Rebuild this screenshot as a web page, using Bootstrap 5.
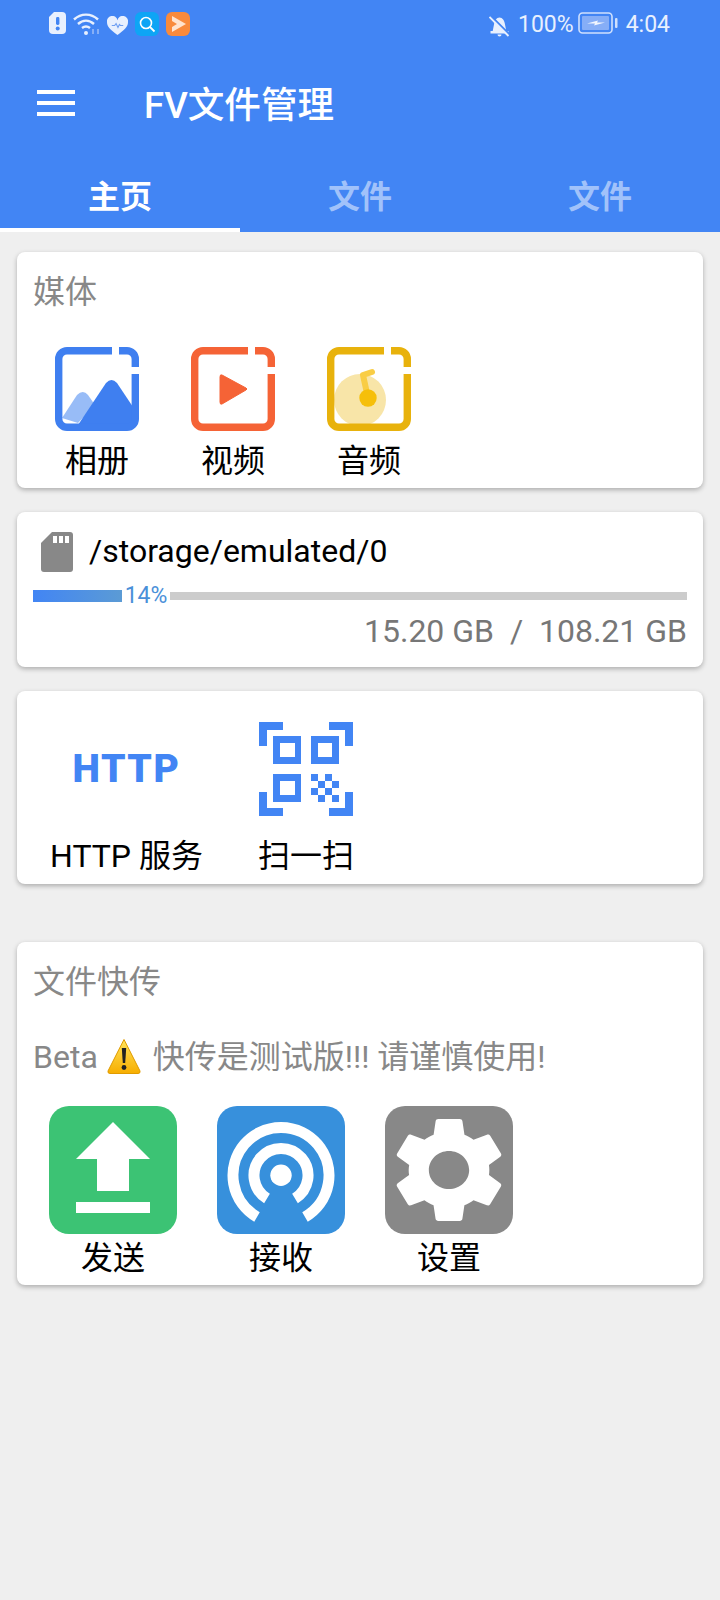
<!DOCTYPE html>
<html lang="zh-CN">
<head>
  <meta charset="UTF-8" />
  <meta name="viewport" content="width=device-width, initial-scale=1" />
  <title>FV文件管理</title>
  <link href="https://cdn.jsdelivr.net/npm/bootstrap@5.3.0/dist/css/bootstrap.min.css" rel="stylesheet" />
  <style>
    body { background: #efefef; font-family: Roboto, "Noto Sans CJK SC", sans-serif; width: 720px; min-height: 1600px; }
    .app-head { background: #4285f4; height: 232px; color: #fff; }
    .status-row { height: 48px; padding: 12px 50px 0 49px; font-size: 23px; line-height: 26px; color: #e8f0fe; }
    .status-icons { gap: 7px; }
    .tool-row { height: 114px; padding: 0 37px; }
    .menu-bars { width: 38px; height: 26px; display: flex; flex-direction: column; justify-content: space-between; margin: 0 69px 4px 0; }
    .menu-bars span { height: 4px; background: #fff; }
    .app-title { font-size: 36.6px; font-weight: 500; line-height: 1; margin-top: 2px; }
    .tab-row { height: 70px; }
    .tab-item { width: 240px; text-align: center; font-size: 32px; font-weight: 700; line-height: 70px; color: #a1c2fa; height: 70px; }
    .tab-item.on { color: #fff; border-bottom: 4px solid #fff; }
    .page-body { padding: 20px 17px; }
    .box { background: #fff; border: 0; border-radius: 8px; box-shadow: 0 2px 5px rgba(0,0,0,.28); margin-bottom: 24px; }
    .box-title { font-size: 32px; line-height: 40px; color: #888; padding: 20px 0 0 16px; }
    .media-box { height: 236px; }
    .media-row { padding: 35px 0 0 12px; }
    .media-item { width: 136px; text-align: center; }
    .media-item svg { display: block; margin: 0 auto 10px; }
    .item-label { font-size: 32px; line-height: 40px; color: #000; white-space: nowrap; }
    .store-box { height: 155px; padding: 20px 16px 0; }
    .sd-icon { margin: 0 16px 0 8px; }
    .store-path { font-size: 32px; line-height: 40px; color: #000; margin-top: -2px; }
    .bar-row { height: 12px; margin-top: 18px; }
    .bar-used { width: 89px; height: 12px; background: linear-gradient(90deg, #4285f4, #5b9bd5); }
    .bar-pct { width: 48px; text-align: center; font-size: 23px; line-height: 12px; color: #4a90d9; }
    .bar-rest { height: 8px; background: #ccc; }
    .store-size { font-size: 32px; line-height: 40px; color: #777; text-align: right; margin-top: 9px; white-space: pre; }
    .tools-box { height: 193px; margin-bottom: 58px; }
    .tools-row { padding: 31px 0 0 33px; gap: 55px; }
    .tools-item { text-align: center; }
    .http-mark { height: 94px; line-height: 94px; font-weight: 900; font-size: 39px; color: #4285f4; letter-spacing: 1.5px; }
    .tools-item svg { display: block; margin: 0 auto; }
    .tools-item .item-label { margin-top: 20px; }
    .share-box { height: 343px; margin-bottom: 0; }
    .beta-line { font-size: 32px; line-height: 40px; color: #888; padding: 35px 0 0 16px; white-space: nowrap; }
    .beta-line svg { vertical-align: -6px; margin: 0 4px 0 1px; }
    .share-row { padding: 29px 0 0 12px; }
    .share-item { width: 168px; text-align: center; padding-left: 20px; padding-right: 20px; }
    .share-item svg { display: block; }
    .share-item .item-label { line-height: 42px; margin-top: 3px; }
  </style>
</head>
<body>

<div class="app-head">
  <!-- status bar -->
  <div class="status-row d-flex justify-content-between">
    <div class="d-flex align-items-start status-icons">
      <svg width="17" height="22" viewBox="0 0 17 22"><path d="M5 0H13a4 4 0 0 1 4 4V18a4 4 0 0 1-4 4H4a4 4 0 0 1-4-4V5Z" fill="#e8f0fe"/><rect x="7" y="5" width="3.4" height="8" rx="1.4" fill="#4285f4"/><circle cx="8.7" cy="16.5" r="2" fill="#4285f4"/></svg>
      <svg width="27" height="24" viewBox="0 0 27 24" fill="none" stroke="#e8f0fe" stroke-width="2.4"><path d="M1 7.5C8 1 18 1 25 7.5"/><path d="M5 12C10 7.5 16 7.5 21 12"/><path d="M9 16C11.500 14 14.500 14 17 16"/><circle cx="13" cy="21" r="2" fill="#e8f0fe" stroke="none"/><path d="M20 22V17M25 17V22" stroke="#9dbdf8" stroke-width="1.500"/></svg>
      <svg width="21" height="20" viewBox="0 0 22 20" class="mt-1"><path d="M11 19.500C4 14 0 11 0 6a5.500 5.500 0 0 1 11-2 5.500 5.500 0 0 1 11 2c0 5-4 8-11 13.500Z" fill="#e8f0fe"/><path d="M5 9.500H8L9.500 7.500L11.500 11.500L13 8.500L14 9.500H17" fill="none" stroke="#6f9ff2" stroke-width="1.200"/></svg>
      <svg width="24" height="24" viewBox="0 0 24 24"><rect width="24" height="24" rx="6" fill="#0ea5f5"/><circle cx="11" cy="11" r="5.500" fill="none" stroke="#fff" stroke-width="1.600"/><path d="M15 15L19.500 19.500" stroke="#fff" stroke-width="1.800"/></svg>
      <svg width="24" height="24" viewBox="0 0 24 24"><rect width="24" height="24" rx="6" fill="#f98a3c"/><path d="M6 4L20 12L6 20V15L11 12L6 9Z" fill="#ffe3cf"/></svg>
    </div>
    <div class="d-flex align-items-start">
      <svg width="21" height="21" viewBox="0 0 21 21" class="mt-1 me-2"><path d="M3.500 16L5 8.500C5.500 4.500 7.500 1.500 10.500 1.500C13.500 1.500 15.500 4.500 16 8.500L17.500 16Z" fill="#e8f0fe"/><rect x="1.500" y="15" width="18" height="2.500" fill="#e8f0fe"/><path d="M8.500 18.500h4a2 2 0 0 1-4 0Z" fill="#e8f0fe"/><path d="M2 0L21 19" stroke="#4285f4" stroke-width="2"/><path d="M.5 1L19.500 20" stroke="#e8f0fe" stroke-width="1.800"/></svg>
      <span>100%</span>
      <svg width="40" height="22" viewBox="0 0 40 22" class="ms-1 me-2"><rect x="1" y="1" width="33" height="20" rx="3.500" fill="none" stroke="#cfe0fd" stroke-width="1.600"/><rect x="4" y="4" width="27" height="14" rx="1" fill="#86aef7"/><path d="M9 11.500L20 8.500L19 10.500H27L16 13.500L17 11.500Z" fill="#f2f6fe"/><rect x="37" y="6" width="2.500" height="10" rx="1" fill="#cfe0fd"/></svg>
      <span>4:04</span>
    </div>
  </div>

  <div class="tool-row d-flex align-items-center">
    <div class="menu-bars"><span></span><span></span><span></span></div>
    <div class="app-title">FV文件管理</div>
  </div>

  <div class="tab-row d-flex">
    <div class="tab-item on">主页</div>
    <div class="tab-item">文件</div>
    <div class="tab-item">文件</div>
  </div>
</div>

<div class="page-body">

  <!-- media -->
  <div class="card box media-box">
    <div class="box-title">媒体</div>
    <div class="media-row d-flex">
      <div class="media-item">
        <svg width="84" height="84" viewBox="0 0 84 84">
          <path d="M23 76L7 71L22 48Q28 42 33 48L40 58Z" fill="#98bcf7"/>
          <path d="M23 78L51 36Q56.500 30 62 36L78 60V78Z" fill="#3f7ff0"/>
          <path d="M64 3.700H72A8.300 8.300 0 0 1 80.300 12V20M80.300 27V72A8.300 8.300 0 0 1 72 80.300H12A8.300 8.300 0 0 1 3.700 72V12A8.300 8.300 0 0 1 12 3.700H57" fill="none" stroke="#3f7ff0" stroke-width="7.400"/>
        </svg>
        <div class="item-label">相册</div>
      </div>
      <div class="media-item">
        <svg width="84" height="84" viewBox="0 0 84 84">
          <path d="M31 28L55 41Q57 42 55 43L31 57Q29 58 29 55V30Q29 27 31 28Z" fill="#f56336" stroke="#f56336" stroke-width="1"/>
          <path d="M64 3.700H72A8.300 8.300 0 0 1 80.300 12V20M80.300 27V72A8.300 8.300 0 0 1 72 80.300H12A8.300 8.300 0 0 1 3.700 72V12A8.300 8.300 0 0 1 12 3.700H57" fill="none" stroke="#f56336" stroke-width="7.400"/>
        </svg>
        <div class="item-label">视频</div>
      </div>
      <div class="media-item">
        <svg width="84" height="84" viewBox="0 0 84 84">
          <clipPath id="discClip"><rect x="4" y="10" width="76" height="67"/></clipPath>
          <circle cx="33" cy="53" r="26" fill="#f8e5a8" clip-path="url(#discClip)"/>
          <path d="M41 51L36 28L45 25" fill="none" stroke="#f9cd45" stroke-width="6" stroke-linecap="round" stroke-linejoin="round"/>
          <circle cx="41" cy="51" r="8.700" fill="#f6bf0a"/>
          <path d="M64 3.700H72A8.300 8.300 0 0 1 80.300 12V20M80.300 27V72A8.300 8.300 0 0 1 72 80.300H12A8.300 8.300 0 0 1 3.700 72V12A8.300 8.300 0 0 1 12 3.700H57" fill="none" stroke="#e8b20c" stroke-width="7.400"/>
        </svg>
        <div class="item-label">音频</div>
      </div>
    </div>
  </div>

  <!-- storage -->
  <div class="card box store-box">
    <div class="d-flex align-items-center">
      <svg class="sd-icon" width="32" height="40" viewBox="0 0 32 40"><path d="M11 0H29a3 3 0 0 1 3 3V37a3 3 0 0 1-3 3H3a3 3 0 0 1-3-3V11Z" fill="#888"/><path d="M12 4h4v7h-4zM18 4h4v7h-4zM24 4h4v7h-4z" fill="#fff"/></svg>
      <div class="store-path">/storage/emulated/0</div>
    </div>
    <div class="bar-row d-flex align-items-center">
      <div class="bar-used"></div>
      <div class="bar-pct">14%</div>
      <div class="bar-rest flex-grow-1"></div>
    </div>
    <div class="store-size">15.20 GB  /  108.21 GB</div>
  </div>

  <!-- http / scan -->
  <div class="card box tools-box">
    <div class="tools-row d-flex">
      <div class="tools-item">
        <div class="http-mark">HTTP</div>
        <div class="item-label">HTTP 服务</div>
      </div>
      <div class="tools-item">
        <svg width="94" height="94" viewBox="0 0 94 94" fill="#4285f4">
          <path d="M0 0H24V8H8V24H0ZM70 0H94V24H86V8H70ZM0 70H8V86H24V94H0ZM86 70H94V94H70V86H86Z"/>
          <path fill-rule="evenodd" d="M14 14H42V42H14ZM21 21V35H36V21ZM52 14H80V42H52ZM59 21V35H73V21ZM14 52H42V80H14ZM21 59V73H36V59Z"/>
          <path d="M52 52h7v7h-7zM66 52h7v7h-7zM59 59h7v7h-7zM73 59h7v7h-7zM52 66h7v7h-7zM66 66h7v7h-7zM59 73h7v7h-7zM73 73h7v7h-7z"/>
        </svg>
        <div class="item-label">扫一扫</div>
      </div>
    </div>
  </div>

  <!-- file transfer -->
  <div class="card box share-box">
    <div class="box-title">文件快传</div>
    <div class="beta-line">Beta
      <svg width="34" height="36" viewBox="0 0 34 36"><defs><linearGradient id="warnFill" x1="0" y1="0" x2="0" y2="1"><stop offset="0" stop-color="#ffe45c"/><stop offset="1" stop-color="#f7ae00"/></linearGradient></defs><path d="M17 1.500L33 33Q33.500 35.500 31 35.500H3Q.500 35.500 1 33Z" fill="url(#warnFill)" stroke="#e09b00" stroke-width="1"/><path d="M14.800 10H19.200L18.200 25H15.800Z" fill="#222"/><circle cx="17" cy="29.500" r="2.400" fill="#222"/></svg>
      快传是测试版!!! 请谨慎使用!</div>
    <div class="share-row d-flex">
      <div class="share-item">
        <svg width="128" height="128" viewBox="0 0 128 128"><rect width="128" height="128" rx="20" fill="#3cc374"/><path d="M64 16L101 53H80V85H48V53H27ZM27 96H101V107H27Z" fill="#fff"/></svg>
        <div class="item-label">发送</div>
      </div>
      <div class="share-item">
        <svg width="128" height="128" viewBox="0 0 128 128"><rect width="128" height="128" rx="20" fill="#3790dc"/><g fill="none" stroke="#fff" stroke-width="11"><path d="M40 111A48 48 0 1 1 88 111"/><path d="M50 92.500A27 27 0 1 1 78 92.500"/></g><circle cx="64" cy="69.300" r="10.700" fill="#fff"/></svg>
        <div class="item-label">接收</div>
      </div>
      <div class="share-item">
        <svg width="128" height="128" viewBox="0 0 128 128"><rect width="128" height="128" rx="20" fill="#888"/><g transform="translate(-3.200 .4) scale(5.6 5.3)"><path fill="#fff" d="M19.140 12.940c.04-.3.06-.61.06-.94 0-.32-.02-.64-.07-.94l2.030-1.580c.18-.14.23-.41.12-.61l-1.920-3.320c-.12-.22-.37-.29-.59-.22l-2.390.96c-.5-.38-1.030-.7-1.620-.94l-.36-2.540c-.04-.24-.24-.41-.48-.41h-3.840c-.24 0-.43.17-.47.41l-.36 2.540c-.59.24-1.130.57-1.620.94l-2.390-.96c-.22-.08-.47 0-.59.22L2.740 8.870c-.12.21-.08.47.12.61l2.030 1.580c-.05.3-.09.63-.09.94s.02.64.07.94l-2.030 1.580c-.18.14-.23.41-.12.61l1.920 3.320c.12.22.37.29.59.22l2.390-.96c.5.38 1.030.7 1.620.94l.36 2.540c.05.24.24.41.48.41h3.840c.24 0 .44-.17.47-.41l.36-2.540c.59-.24 1.130-.56 1.620-.94l2.390.96c.22.08.47 0 .59-.22l1.920-3.320c.12-.22.07-.47-.12-.61l-2.010-1.580zM12 15.600c-1.980 0-3.600-1.620-3.600-3.600s1.620-3.600 3.600-3.600 3.600 1.620 3.600 3.600-1.620 3.600-3.600 3.600z"/></g></svg>
        <div class="item-label">设置</div>
      </div>
    </div>
  </div>

</div>

<script src="https://cdn.jsdelivr.net/npm/bootstrap@5.3.0/dist/js/bootstrap.bundle.min.js"></script>
</body>
</html>
